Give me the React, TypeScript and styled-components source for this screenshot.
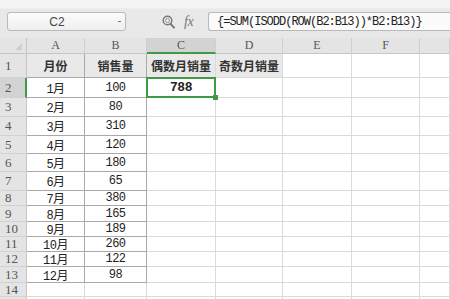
import React from "react";
import styled, { createGlobalStyle, css } from "styled-components";

const GlobalStyle = createGlobalStyle`
  html, body {
    margin: 0;
    padding: 0;
    background: #ffffff;
    overflow: hidden;
  }
  body {
    font-family: "Liberation Sans", "Noto Sans CJK SC", sans-serif;
  }
`;

const GREEN = "#3f9b48";
const COLS = ["A", "B", "C", "D", "E", "F", ""];
const ROW_HEIGHTS = [24, 20, 19, 19, 18, 18, 19, 15, 16, 15, 15, 15, 16, 14, 14];

const data: [string, string][] = [
  ["1月", "100"],
  ["2月", "80"],
  ["3月", "310"],
  ["4月", "120"],
  ["5月", "180"],
  ["6月", "65"],
  ["7月", "380"],
  ["8月", "165"],
  ["9月", "189"],
  ["10月", "260"],
  ["11月", "122"],
  ["12月", "98"],
];

const Page = styled.div`
  width: 450px;
  height: 299px;
  overflow: hidden;
  display: flex;
  flex-direction: column;
`;

const Toolbar = styled.div`
  height: 38px;
  flex-shrink: 0;
  display: flex;
  align-items: flex-start;
  padding-top: 12px;
  box-sizing: border-box;
  background: linear-gradient(#f3f3f3 0, #f3f3f3 8px, #e9e9e9 9px, #e8e8e8 100%);
`;

const NameBox = styled.div`
  margin-left: 7px;
  width: 119px;
  height: 19px;
  box-sizing: border-box;
  border: 1px solid #b9b9b9;
  border-radius: 3px;
  background: linear-gradient(#fbfbfb, #efefef);
  display: flex;
  align-items: center;
  font-family: "Liberation Sans", sans-serif;
  font-size: 12px;
  color: #444;
`;

const NameText = styled.span`
  flex: 1;
  text-align: center;
  padding-right: 12px;
`;

const Caret = styled.span`
  width: 3px;
  height: 1px;
  background: #777;
  margin-right: 4px;
`;

const IconArea = styled.div`
  margin-left: 36px;
  width: 44px;
  height: 19px;
  display: flex;
  align-items: center;
  gap: 9px;
`;

const Fx = styled.span`
  font-family: "Liberation Serif", serif;
  font-style: italic;
  font-size: 14px;
  color: #777;
  letter-spacing: -0.5px;
`;

const FormulaBox = styled.div`
  margin-left: 2px;
  flex: 1;
  height: 19px;
  box-sizing: border-box;
  border: 1px solid #b9b9b9;
  border-right: none;
  border-radius: 3px 0 0 3px;
  background: #fbfbfb;
  padding-left: 8px;
  display: flex;
  align-items: center;
  font-family: "Liberation Mono", monospace;
  font-size: 12px;
  letter-spacing: -1px;
  color: #222;
  white-space: nowrap;
`;

const Sheet = styled.div`
  display: grid;
  grid-template-columns: 27px 58px 62px 69px 67px 69px 68px 30px;
  grid-template-rows: 16px ${ROW_HEIGHTS.map((h) => `${h}px`).join(" ")};
  background: #ffffff;
`;

const Corner = styled.div`
  background: #e4e4e4;
  border-right: 1px solid #c6c6c6;
  border-bottom: 1px solid #c6c6c6;
  box-sizing: border-box;
  position: relative;
  &::after {
    content: "";
    position: absolute;
    right: 4px;
    bottom: 3px;
    border-left: 7px solid transparent;
    border-bottom: 7px solid #cfcfcf;
  }
`;

const ColHead = styled.div<{ $active?: boolean }>`
  background: ${(p) => (p.$active ? "#d3d3d3" : "#e4e4e4")};
  border-right: 1px solid #cfcfcf;
  border-bottom: ${(p) => (p.$active ? `2px solid ${GREEN}` : "1px solid #c6c6c6")};
  box-sizing: border-box;
  display: flex;
  align-items: center;
  justify-content: center;
  font-family: "Liberation Serif", serif;
  font-size: 12px;
  color: #555;
`;

const RowHead = styled.div<{ $active?: boolean }>`
  background: ${(p) => (p.$active ? "#d3d3d3" : "#e4e4e4")};
  border-right: ${(p) => (p.$active ? `2px solid ${GREEN}` : "1px solid #c6c6c6")};
  border-bottom: 1px solid #d2d2d2;
  box-sizing: border-box;
  display: flex;
  align-items: center;
  padding-left: 5px;
  font-family: "Liberation Serif", serif;
  font-size: 13px;
  color: #555;
`;

const Cell = styled.div<{ $title?: boolean; $boxed?: boolean; $selected?: boolean }>`
  box-sizing: border-box;
  border-right: 1px solid #dadada;
  border-bottom: 1px solid #dadada;
  display: flex;
  align-items: center;
  justify-content: center;
  font-family: "Liberation Mono", "Noto Sans CJK SC", monospace;
  font-size: 12px;
  letter-spacing: -0.5px;
  color: #222;
  white-space: nowrap;
  position: relative;
  ${(p) =>
    p.$boxed &&
    css`
      border-right-color: #a9a9a9;
      border-bottom-color: #a9a9a9;
    `}
  ${(p) =>
    p.$title &&
    css`
      background: #e9e9e9;
      font-family: "Noto Sans CJK SC", sans-serif;
      font-weight: 700;
      font-size: 12px;
      letter-spacing: 0;
      color: #333;
    `}
  ${(p) =>
    p.$selected &&
    css`
      font-weight: 700;
      font-size: 13px;
      &::before {
        content: "";
        position: absolute;
        left: -1px;
        top: -1px;
        right: -1px;
        bottom: -1px;
        border: 2px solid ${GREEN};
      }
      &::after {
        content: "";
        position: absolute;
        right: -3px;
        bottom: -3px;
        width: 5px;
        height: 5px;
        background: ${GREEN};
        z-index: 2;
      }
    `}
`;

function ZoomIcon() {
  return (
    <svg width="13" height="14" viewBox="0 0 13 14">
      <circle cx="5.5" cy="5.5" r="4.3" fill="none" stroke="#777" strokeWidth="1.4" />
      <circle cx="5.5" cy="5.5" r="2" fill="none" stroke="#999" strokeWidth="1" />
      <path d="M8.6 8.8 L12 12.6" stroke="#777" strokeWidth="2" strokeLinecap="round" />
    </svg>
  );
}

function buildRow(r: number) {
  const cells: React.ReactNode[] = [];
  const isTitle = r === 1;
  const item = r >= 2 && r <= 13 ? data[r - 2] : null;
  for (let c = 0; c < COLS.length; c++) {
    let text = "";
    if (isTitle) text = ["月份", "销售量", "偶数月销量", "奇数月销量", "", "", ""][c];
    else if (item && c < 2) text = item[c];
    else if (r === 2 && c === 2) text = "788";
    cells.push(
      <Cell
        key={`${r}-${c}`}
        $title={isTitle && c < 4}
        $boxed={r <= 13 && c < 2}
        $selected={r === 2 && c === 2}
      >
        {text}
      </Cell>
    );
  }
  return cells;
}

export default function App() {
  return (
    <>
      <GlobalStyle />
      <Page>
        <Toolbar>
          <NameBox>
            <NameText>C2</NameText>
            <Caret />
          </NameBox>
          <IconArea>
            <ZoomIcon />
            <Fx>fx</Fx>
          </IconArea>
          <FormulaBox>{"{=SUM(ISODD(ROW(B2:B13))*B2:B13)}"}</FormulaBox>
        </Toolbar>
        <Sheet>
          <Corner />
          {COLS.map((c, i) => (
            <ColHead key={i} $active={c === "C"}>
              {c}
            </ColHead>
          ))}
          {ROW_HEIGHTS.map((_, i) => {
            const r = i + 1;
            return (
              <React.Fragment key={r}>
                <RowHead $active={r === 2}>{r <= 14 ? r : ""}</RowHead>
                {buildRow(r)}
              </React.Fragment>
            );
          })}
        </Sheet>
      </Page>
    </>
  );
}
